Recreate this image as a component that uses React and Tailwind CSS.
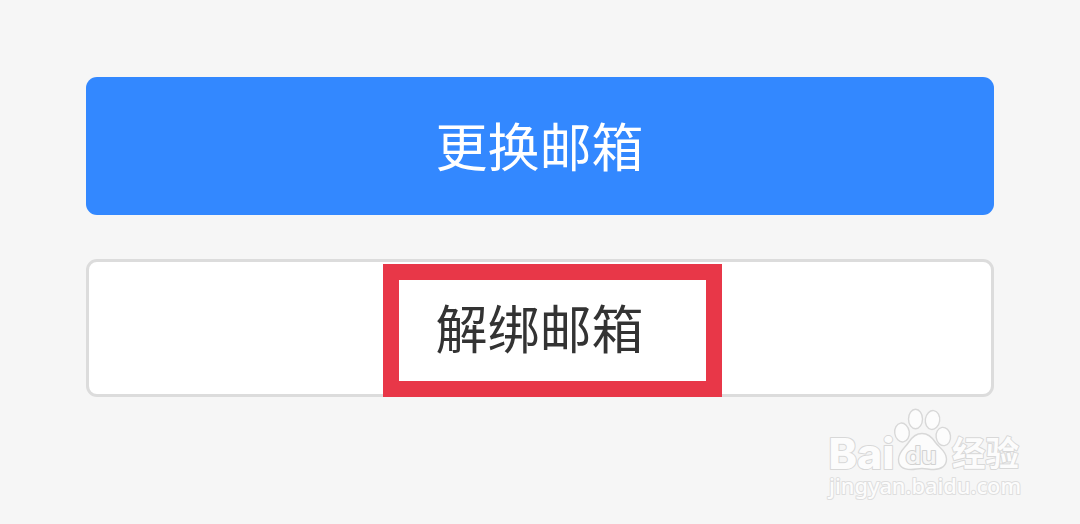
import clsx from "clsx";

function ActionButton({ label, primary, highlighted }) {
  return (
    <button
      type="button"
      className={clsx(
        "relative flex h-[138px] w-full items-center justify-center rounded-[11px] pr-px pb-[2px] text-[52px] leading-none",
        primary ? "bg-[#3388ff] text-white" : "border-[3px] border-[#dcdcdc] bg-white text-[#333333]"
      )}
    >
      <span className="whitespace-nowrap">{label}</span>
      {/* marker frame drawn over the button */}
      {highlighted && (
        <span className="absolute top-[2px] left-[294px] h-[133px] w-[339px] border-[16px] border-[#e83748]" />
      )}
    </button>
  );
}

function Watermark() {
  return (
    <svg
      className="absolute top-[400px] left-[820px] h-[110px] w-[210px]"
      viewBox="0 0 210 110"
      fill="#fcfcfc"
      stroke="#d8d8d8"
      strokeWidth="2"
      strokeLinejoin="round"
    >
      <text
        x="8.5"
        y="68.5"
        fontSize="42"
        fontWeight="800"
        textLength="66"
        lengthAdjust="spacingAndGlyphs"
        className="font-['Inter',sans-serif] [paint-order:stroke]"
      >
        Bai
      </text>

      {/* paw */}
      <g strokeWidth="1.4">
        <ellipse cx="82" cy="32.5" rx="7.3" ry="9.5" transform="rotate(-8 82 32.5)" />
        <ellipse cx="95.5" cy="19" rx="7" ry="9.7" />
        <ellipse cx="112.5" cy="20" rx="7.2" ry="9.5" transform="rotate(8 112.5 20)" />
        <ellipse cx="123.3" cy="36.5" rx="7.2" ry="9.2" transform="rotate(-8 123.3 36.5)" />
        <path d="M102 33.5C108 33.5 112 37 115.5 42.5C119 47.5 126.5 51 126.5 59C126.5 66 121 69.5 114 69.5C109 69.5 106 68.5 102 68.5C98 68.5 95 69.5 91 69.5C83 69.5 78.5 66 78.5 59.5C78.5 51.5 85 48 88.5 42.5C92 37 96 33.5 102 33.5Z" />
      </g>
      <text
        x="85.5"
        y="64"
        fontSize="24"
        fontWeight="600"
        textLength="31"
        lengthAdjust="spacingAndGlyphs"
        fill="#f6f6f6"
        stroke="#d2d2d2"
        strokeWidth="2"
        className="font-['Inter',sans-serif] [paint-order:stroke]"
      >
        du
      </text>

      <text
        x="132"
        y="66"
        fontSize="34"
        fontWeight="700"
        textLength="67"
        lengthAdjust="spacingAndGlyphs"
        className="font-['Noto_Sans_CJK_SC',sans-serif] [paint-order:stroke]"
      >
        经验
      </text>
      <text
        x="9"
        y="94"
        fontSize="22"
        fontWeight="500"
        textLength="192"
        lengthAdjust="spacingAndGlyphs"
        stroke="#dedede"
        className="font-['Noto_Sans',sans-serif] [paint-order:stroke]"
      >
        jingyan.baidu.com
      </text>
    </svg>
  );
}

export default function App() {
  return (
    <main className="relative h-[524px] w-[1080px] overflow-hidden bg-[#f6f6f6] px-[86px] pt-[77px] font-['Noto_Sans_CJK_SC',sans-serif]">
      <div className="flex flex-col gap-[44px]">
        <ActionButton label="更换邮箱" primary />
        <ActionButton label="解绑邮箱" highlighted />
      </div>
      <Watermark />
    </main>
  );
}
